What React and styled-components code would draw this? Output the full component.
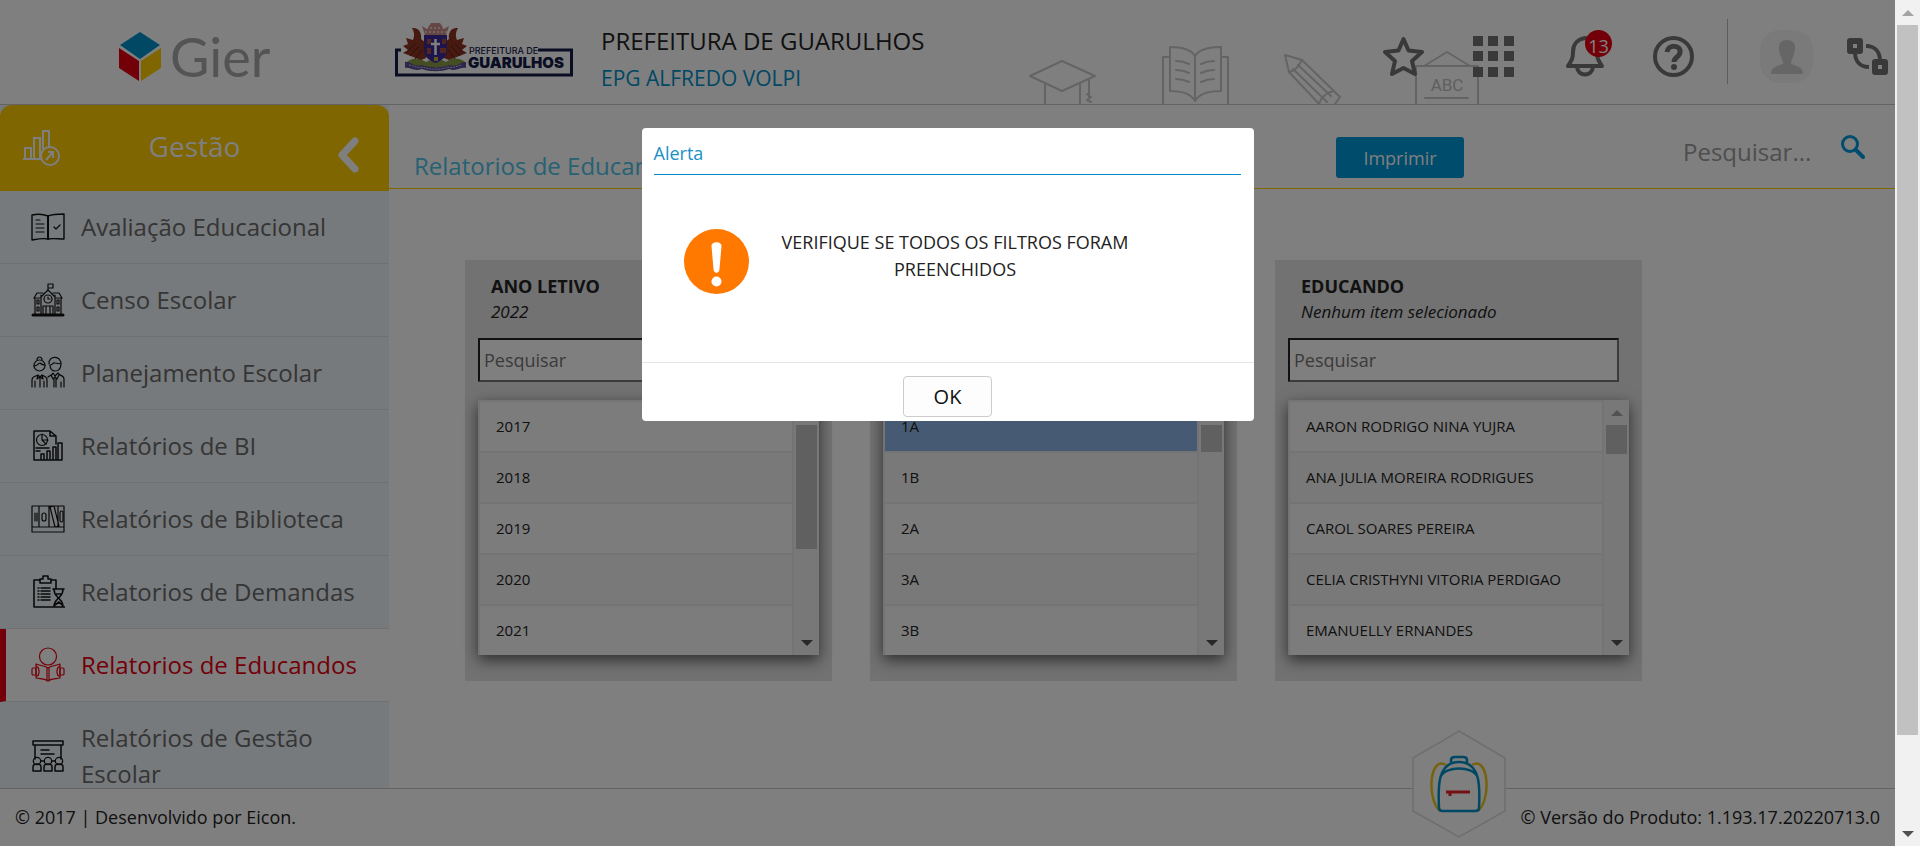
import React from "react";
import styled, { createGlobalStyle, css } from "styled-components";

const GlobalStyle = createGlobalStyle`
  *, *::before, *::after { box-sizing: border-box; }
  body { margin: 0; font-family: "Open Sans", "Noto Sans", sans-serif; color: #222; background: #fff; }
  button, input { font: inherit; }
  button { cursor: pointer; }
  ul { list-style: none; margin: 0; padding: 0; }
  svg { display: block; flex: none; }
`;

const Shell = styled.div`
  display: flex;
  height: 100vh;
  overflow: hidden;
`;

const Page = styled.div`
  position: relative;
  flex: 1;
  min-width: 0;
  display: flex;
  flex-direction: column;
`;

const Header = styled.header`
  position: relative;
  flex: none;
  display: flex;
  align-items: center;
  height: 105px;
  border-bottom: 1px solid #c6c6c6;
`;

const Brand = styled.div`
  display: flex;
  align-items: center;
  gap: 8px;
  width: 395px;
  padding: 10px 0 0 118px;
`;

const BrandName = styled.span`
  font-family: Lato, sans-serif;
  font-size: 54px;
  line-height: 60px;
  color: #a8a8a8;
`;

const City = styled.div`
  display: flex;
  align-items: center;
  gap: 28px;
  flex: 1;
`;

const CityNames = styled.div`
  display: flex;
  flex-direction: column;
  padding-top: 15px;
`;

const CityName = styled.strong`
  font-weight: 400;
  font-size: 24px;
  line-height: 36px;
`;

const SchoolLink = styled.a`
  font-size: 21px;
  line-height: 38px;
  color: #0090c8;
  text-decoration: none;
`;

const HeaderArt = styled.svg`
  position: absolute;
  right: 416px;
  bottom: 0;
  z-index: 0;
`;

const Tools = styled.nav`
  position: relative;
  display: flex;
  align-items: center;
  padding: 8px 7px 0 0;
`;

const ToolButton = styled.button`
  position: relative;
  border: 0;
  padding: 0;
  background: none;
  color: #737373;
  margin-right: ${(p) => p.$gap || 0}px;
`;

const Badge = styled.span`
  position: absolute;
  top: -6px;
  right: -8px;
  width: 27px;
  height: 27px;
  border-radius: 50%;
  background: #e60010;
  color: #fff;
  font-size: 18px;
  line-height: 32px;
  text-align: center;
`;

const Divider = styled.span`
  width: 1px;
  height: 65px;
  margin: 0 32px 10px 0;
  background: #b8b8b8;
`;

const Body = styled.div`
  flex: 1;
  min-height: 0;
  display: flex;
  overflow: hidden;
`;

const Sidebar = styled.aside`
  flex: none;
  width: 389px;
  background: #eef4f8;
`;

const SidebarHead = styled.div`
  display: flex;
  align-items: center;
  justify-content: space-between;
  height: 86px;
  padding: 0 30px 0 23px;
  border-radius: 12px 12px 0 0;
  background: #ffcc00;
  color: #fff;
`;

const SidebarTitle = styled.h2`
  flex: 1;
  margin: 0;
  padding: 0 8px 4px 0;
  font-weight: 400;
  font-size: 28px;
  line-height: 42px;
  text-align: center;
`;

const CollapseButton = styled.button`
  border: 0;
  padding: 14px 0 0;
  background: none;
  color: #fff;
`;

const MenuLink = styled.a`
  display: flex;
  align-items: center;
  gap: 16px;
  min-height: 73px;
  padding: 18px 24px 18px 31px;
  border-bottom: 1px solid #dbe2e6;
  color: #6b6b6b;
  font-size: 24px;
  line-height: 36px;
  text-decoration: none;
  svg { color: #111; }
  ${(p) =>
    p.$active &&
    css`
      background: #fff;
      border-left: 6px solid #e60010;
      padding-left: 25px;
      color: #e60010;
      svg { color: #e60010; }
    `}
`;

const Content = styled.main`
  flex: 1;
  min-width: 0;
`;

const Toolbar = styled.div`
  display: flex;
  align-items: center;
  height: 84px;
  padding: 0 30px 0 25px;
  border-bottom: 1px solid #ffcc00;
`;

const PageTitle = styled.h1`
  flex: 1;
  margin: 0;
  padding-top: 38px;
  font-weight: 400;
  font-size: 24px;
  line-height: 44px;
  color: #4cc3e8;
`;

const PrintButton = styled.button`
  width: 128px;
  height: 41px;
  margin: 22px 219px 0 0;
  border: 0;
  border-radius: 3px;
  background: #0098d8;
  color: #fff;
  font-size: 18px;
`;

const SearchForm = styled.form`
  display: flex;
  align-items: center;
  gap: 18px;
`;

const SearchInput = styled.input`
  width: 140px;
  border: 0;
  padding: 10px 0 0;
  outline: 0;
  background: none;
  font-size: 24px;
  line-height: 36px;
  &::placeholder { color: #9c9c9c; opacity: 1; }
`;

const SearchButton = styled.button`
  border: 0;
  padding: 0;
  background: none;
  color: #0098d8;
`;

const Filters = styled.div`
  display: flex;
  gap: 38px;
  padding: 71px 76px 0;
`;

const Panel = styled.section`
  flex: none;
  width: 367px;
  padding: 13px 13px 26px;
  background: #e4e4e4;
`;

const PanelTitle = styled.h3`
  margin: 0 13px;
  font-weight: 700;
  font-size: 18px;
  line-height: 26px;
`;

const PanelNote = styled.p`
  margin: 0 13px 13px;
  font-style: italic;
  font-size: 17px;
  line-height: 26px;
`;

const PanelSearch = styled.input`
  display: block;
  width: 331px;
  height: 44px;
  margin-bottom: 18px;
  padding: 0 4px;
  border: 2px solid;
  border-color: #222 #767676 #767676 #222;
  background: #fff;
  font-size: 18px;
  &::placeholder { color: #757575; opacity: 1; }
`;

const ListBox = styled.div`
  display: flex;
  height: 255px;
  padding-left: 2px;
  background: #e9e9e9;
  box-shadow: 0 5px 14px rgba(0, 0, 0, 0.6);
`;

const Options = styled.ul`
  flex: 1;
  overflow: hidden;
`;

const Option = styled.li`
  height: 51px;
  padding: 0 16px;
  border-top: 2px solid #e9e9e9;
  background: ${(p) => (p.$selected ? "#8cb6e6" : "#f3f3f3")};
  color: #222;
  font-size: 15px;
  line-height: 49px;
  white-space: nowrap;
  &:nth-child(odd) { background: ${(p) => (p.$selected ? "#8cb6e6" : "#f9f9f9")}; }
`;

const Track = styled.div`
  flex: none;
  display: flex;
  flex-direction: column;
  align-items: center;
  width: 25px;
  margin-left: ${(p) => (p.$inset ? 2 : 0)}px;
  background: #f1f1f1;
`;

const Arrow = styled.span`
  flex: none;
  display: grid;
  place-items: center;
  height: 25px;
`;

const Thumb = styled.span`
  width: 21px;
  flex: ${(p) => (p.$grow ? p.$grow : "none")};
  height: ${(p) => (p.$size ? p.$size + "px" : "auto")};
  background: #c1c1c1;
`;

const Rest = styled.span`
  flex: ${(p) => p.$grow || 1};
`;

const Footer = styled.footer`
  flex: none;
  position: relative;
  display: flex;
  align-items: center;
  justify-content: space-between;
  height: 58px;
  padding: 0 15px 2px;
  border-top: 1px solid #c6c6c6;
  background: #fff;
  font-size: 18px;
  line-height: 28px;
`;

const BackpackLink = styled.a`
  position: absolute;
  right: 389px;
  top: -59px;
`;

const Overlay = styled.div`
  position: absolute;
  inset: 0;
  z-index: 5;
  display: flex;
  justify-content: center;
  align-items: flex-start;
  padding-top: 128px;
  background: rgba(0, 0, 0, 0.5);
`;

const Dialog = styled.div`
  width: 612px;
  max-width: 90%;
  border-radius: 4px;
  background: #fff;
`;

const DialogTitle = styled.h2`
  margin: 0 13px 0 12px;
  padding: 12px 0 7px;
  border-bottom: 1px solid #0090c8;
  font-weight: 400;
  font-size: 18px;
  line-height: 27px;
  color: #1a8fc8;
`;

const DialogBody = styled.div`
  display: flex;
  align-items: flex-start;
  height: 187px;
  padding: 54px 42px 0;
`;

const DialogText = styled.p`
  flex: 1;
  margin: 0;
  padding: 0 50px 0 0;
  text-align: center;
  font-size: 18px;
  line-height: 27px;
  span { display: block; }
`;

const DialogFooter = styled.div`
  display: flex;
  justify-content: center;
  padding: 13px 0 4px;
  border-top: 1px solid #e5e5e5;
`;

const OkButton = styled.button`
  width: 89px;
  height: 41px;
  border: 1px solid #ccc;
  border-radius: 4px;
  background: #fdfdfd;
  color: #111;
  font-size: 20px;
`;

function LineIcon({ children, w = 34, h = 34, sw = 1.2 }) {
  return (
    <svg width={w} height={h} viewBox={`0 0 ${w} ${h}`} fill="none" stroke="currentColor" strokeWidth={sw} strokeLinecap="round" strokeLinejoin="round" aria-hidden="true">
      {children}
    </svg>
  );
}

const icons = {
  book: (
    <LineIcon>
      <path d="M17 6C12 4 6 4 1 5v25c6-1 11-2 16-1 5-1 10 0 16 0V4C27 4 22 4 17 6z" strokeWidth="1.4" />
      <path d="M17 6v23" strokeWidth="2" />
      <path d="M5 10h4M5 14h8M5 18h8M5 22h8M23 17l2 2 4-4" />
    </LineIcon>
  ),
  school: (
    <LineIcon>
      <path d="M17 7V1h5v4h-5M3 15l3-5h6M31 15l-3-5h-6M10 14l7-7 7 7M10 12v19M24 12v19M4 15v16M30 15v16M3 15h7M24 15h7M12 31v-8h10v8M15 23v8M19 23v8M6 17h2v4H6zM6 24h2v4H6zM26 17h2v4h-2zM26 24h2v4h-2z" />
      <circle cx="17" cy="16" r="4" />
      <path d="M17 14v2h2" />
      <path d="M2 32h30" strokeWidth="3" />
    </LineIcon>
  ),
  people: (
    <LineIcon>
      <circle cx="8.500" cy="9.500" r="5.500" />
      <path d="M6 4c0-4 5-4 5 0M3 10c4 0 4-3 6-3 2 2 3 2 5 2" />
      <path d="M18 8c-1-9 13-9 12 1-1 8-11 8-11 0 3 0 3-3 5-2l6 1" />
      <path d="M1 31v-7c0-4 3-3 6-5l2 2 2-2c3 2 5 1 5 5v7M4 31v-6M13 31v-6M7 19l-1 4 3-2 3 2-1-4M9 22v9" />
      <path d="M17 21c2-2 4-1 5-4l2 3 3-3c1 3 6 2 6 6v8M20 19l2 4 2-2 2 2 2-4M23 23v8M25 23v8M30 31v-5" />
    </LineIcon>
  ),
  bi: (
    <LineIcon>
      <path d="M25 15V7l-6-5H3v29h28V14h-4v17M19 2v5h6M10 31v-6h3v6M16 31v-9h3v9M22 31V18h3v13M5 19h13M5 22h4" strokeWidth="1.5" />
      <circle cx="11" cy="11" r="5.5" />
      <path d="M11 5v6h6M11 11l4 4" />
    </LineIcon>
  ),
  library: (
    <LineIcon>
      <path d="M1 4h32v26H1zM1 25h32M8 4v21M18 4v21M27 4v21M4 11v8M6 11v8M19 5l4-1 5 20-4 1z" />
      <rect x="11" y="11" width="4" height="8" rx="2" />
      <rect x="29" y="9" width="3" height="11" rx="1.5" />
    </LineIcon>
  ),
  demand: (
    <LineIcon>
      <path d="M8 5H3v27h31M20 5h5v8M9 4h3V1h5v3h3v4H9zM22 14h11M22 32h11M23 14c0 7 4 7 4 9s-4 2-4 9M32 14c0 7-4 7-4 9s4 2 4 9M25 19h5M24 30l4-3 3 3" strokeWidth="1.6" />
      <path d="M7 13h1M10 13h9M7 16h1M10 16h9M7 19h1M10 19h9M7 22h1M10 22h9M7 25h1M10 25h9" strokeWidth="1.5" />
    </LineIcon>
  ),
  reader: (
    <LineIcon h={36}>
      <circle cx="17" cy="9.500" r="8.500" />
      <path d="M17 21c-4-3-8-2-12-4v14c4 1 8 0 12 3 4-3 8-2 12-3V17c-4 2-8 1-12 4zM16 21v13M18 21v13M5 20c4-2 4 11 0 9M29 20c-4-2-4 11 0 9" />
      <rect x="1" y="21" width="4" height="7" rx="1" />
      <rect x="29" y="21" width="4" height="7" rx="1" />
    </LineIcon>
  ),
  meeting: (
    <LineIcon>
      <path d="M2 2h30v4H2zM4 6v14M30 6v14M10 11h8M10 15h13M2 32v-4c0-4 8-4 8 0v4zM13 32v-4c0-4 8-4 8 0v4zM24 32v-4c0-4 8-4 8 0v4zM10 22h3M21 22h3" strokeWidth="1.5" />
      <circle cx="6" cy="22" r="3.7" />
      <circle cx="17" cy="22" r="3.7" />
      <circle cx="28" cy="22" r="3.7" />
    </LineIcon>
  ),
};

const menu = [
  ["book", "Avaliação Educacional"],
  ["school", "Censo Escolar"],
  ["people", "Planejamento Escolar"],
  ["bi", "Relatórios de BI"],
  ["library", "Relatórios de Biblioteca"],
  ["demand", "Relatorios de Demandas"],
  ["reader", "Relatorios de Educandos", true],
  ["meeting", "Relatórios de Gestão Escolar"],
];

const filters = [
  { title: "ANO LETIVO", note: "2022", thumb: 124, options: ["2017", "2018", "2019", "2020", "2021"] },
  { title: "TURMA", note: "1A", thumb: 27, selected: "1A", options: ["1A", "1B", "2A", "3A", "3B"] },
  {
    title: "EDUCANDO",
    note: "Nenhum item selecionado",
    thumb: 29,
    options: ["AARON RODRIGO NINA YUJRA", "ANA JULIA MOREIRA RODRIGUES", "CAROL SOARES PEREIRA", "CELIA CRISTHYNI VITORIA PERDIGAO", "EMANUELLY ERNANDES"],
  },
];

function Triangle({ up, color }) {
  return (
    <svg width="12" height="6" viewBox="0 0 12 6" aria-hidden="true">
      <path d={up ? "M0 6L6 0l6 6z" : "M0 0l6 6 6-6z"} fill={color} />
    </svg>
  );
}

function CubeLogo() {
  return (
    <svg width="44" height="50" viewBox="0 0 44 50" aria-hidden="true">
      <path d="M22 0l20 13-20 14L2 13z" fill="#0090c8" />
      <path d="M1 16l20 13v20L1 36z" fill="#e60010" />
      <path d="M43 16L23 29v20l20-13z" fill="#ffcc00" />
    </svg>
  );
}

function CityLogo() {
  return (
    <svg width="178" height="60" viewBox="0 0 178 60" aria-label="Prefeitura de Guarulhos" role="img">
      <path d="M6 28H1.500v25h175V28H143" fill="none" stroke="#141a48" strokeWidth="3" />
      <path d="M12 40c8-6 14-3 19 0 7-4 14-4 20 0 5-4 12-5 19 0l-2 5H13z" fill="#8a9a45" />
      <path d="M26 38L8 31l5-3-5-4 5-2-2-6 7 2c2-5 1-8-1-12 7-1 10 5 9 11l5 4v15z" fill="#8c3420" />
      <path d="M54 38l18-7-5-3 5-4-5-2 2-6-7 2c-2-5-1-8 1-12-7-1-10 5-9 11l-5 4v15z" fill="#8c3420" />
      <path d="M12 30l8-8M15 34l9-10M20 37l7-9M68 30l-8-8M65 34l-9-10M60 37l-7-9" stroke="#5a1e12" strokeWidth="1" />
      <path d="M29 13h23v15c0 7-6 11-11.500 13C35 39 29 35 29 28z" fill="#3c2a9a" />
      <path d="M40.500 17v16M36 22h9" stroke="#fff" strokeWidth="2.500" />
      <path d="M32 17h4v5h-4zM47 17h4v5h-4zM32 26h4v6h-4zM45 26h6v5h-6z" fill="#a0503c" />
      <path d="M39 35h4v4h-4z" fill="#c8a83c" />
      <path d="M27 4l5 3 4-6h9l4 6 5-3-3 9H30z" fill="#c98d88" />
      <path d="M30 10h22M31 6h19" stroke="#fff" strokeWidth="1" strokeDasharray="2 2" />
      <path d="M10 40c5-2 9 6 17 3 8 3 20 3 27 0 8 3 12-4 17-3v6c-6-1-10 4-17 1-8 3-19 3-27 0-8 3-12-2-17-1z" fill="#5a4e96" />
      <path d="M14 43c4 0 8 4 14 2 7 3 18 3 25 0 6 2 10-2 14-2" fill="none" stroke="#c8c4dc" strokeWidth="1" strokeDasharray="2 1" />
      <text x="74" y="32" fontFamily="Inter, sans-serif" fontSize="9" fontWeight="500" fill="#141a48">PREFEITURA DE</text>
      <text x="73" y="46" fontFamily="Inter, sans-serif" fontSize="15" fontWeight="900" fill="#141a48">GUARULHOS</text>
    </svg>
  );
}

function Decoration() {
  return (
    <HeaderArt width="450" height="58" viewBox="0 0 450 58" fill="none" stroke="#c9c9c9" strokeWidth="2" strokeLinejoin="round" strokeLinecap="round" aria-hidden="true">
      <path d="M1 30L33 15l33 15-33 15zM16 37v23M51 37v23M60 33v18M58 48l4 3-4 3 4 2" />
      <path d="M141 11h-7v49M192 11h7v49M166 10c-5-8-16-9-25-9v44c9 0 20 1 25 10 5-9 17-10 26-10V1c-9 0-21 1-26 9zM166 10v44M147 15c5 0 9 1 13 3M147 24c5 0 9 1 13 3M147 33c5 0 9 1 13 3M185 15c-5 0-9 1-13 3M185 24c-5 0-9 1-13 3M185 33c-5 0-9 1-13 3" />
      <path d="M256 9l17 5 38 37-7 10M256 9l4 17 32 34M260 26c6-1 10-6 13-12M264 23l34 33M269 19l33 31M290 58c2-7 8-12 15-13" />
      <path d="M387 60V20h62v40M395 20l23-14 23 14M396 52h43" />
      <text x="418" y="45" textAnchor="middle" fontFamily="Roboto, sans-serif" fontSize="17" fill="#c0c0c0" stroke="none">ABC</text>
    </HeaderArt>
  );
}

function FilterPanel({ title, note, options, selected, thumb }) {
  const id = "filtro-" + title.replace(" ", "-").toLowerCase();
  return (
    <Panel aria-labelledby={id}>
      <PanelTitle id={id}>{title}</PanelTitle>
      <PanelNote>{note}</PanelNote>
      <PanelSearch type="text" placeholder="Pesquisar" aria-label={"Pesquisar " + title} />
      <ListBox>
        <Options>
          {options.map((o) => (
            <Option key={o} $selected={o === selected}>{o}</Option>
          ))}
        </Options>
        <Track $inset>
          <Arrow><Triangle up color="#a3a3a3" /></Arrow>
          <Thumb $size={thumb} />
          <Rest />
          <Arrow><Triangle color="#505050" /></Arrow>
        </Track>
      </ListBox>
    </Panel>
  );
}

export default function App() {
  return (
    <>
      <GlobalStyle />
      <Shell>
        <Page>
          <Header>
            <Decoration />
            <Brand>
              <CubeLogo />
              <BrandName>Gier</BrandName>
            </Brand>
            <City>
              <CityLogo />
              <CityNames>
                <CityName>PREFEITURA DE GUARULHOS</CityName>
                <SchoolLink href="#escola">EPG ALFREDO VOLPI</SchoolLink>
              </CityNames>
            </City>
            <Tools>
              <ToolButton $gap={49} aria-label="Favoritos">
                <svg width="41" height="41" viewBox="0 0 41 41" fill="none" stroke="currentColor" strokeWidth="4" strokeLinejoin="round">
                  <path d="M20.500 3l5 11.500L39 16l-10 9 3 13-11.500-6L9 38l3-13L2 16l13.500-1.500z" />
                </svg>
              </ToolButton>
              <ToolButton $gap={52} aria-label="Aplicativos">
                <svg width="41" height="41" viewBox="0 0 41 41" fill="currentColor">
                  {[0, 15, 31].map((y) => [0, 15, 31].map((x) => <rect key={x + "-" + y} x={x} y={y} width="10" height="10" />))}
                </svg>
              </ToolButton>
              <ToolButton $gap={49} aria-label="Notificações">
                <svg width="38" height="41" viewBox="0 0 38 41" fill="none" stroke="currentColor" strokeWidth="4" strokeLinejoin="round">
                  <path d="M19 2c-7 1-12 6-12 14 0 6-1 8-5 14h34c-4-6-5-8-5-14 0-8-5-13-12-14zM11 31c1 10 15 10 16 0" />
                </svg>
                <Badge>13</Badge>
              </ToolButton>
              <ToolButton $gap={33} aria-label="Ajuda">
                <svg width="41" height="41" viewBox="0 0 41 41" fill="none" stroke="currentColor">
                  <circle cx="20.500" cy="20.500" r="18.500" strokeWidth="4" />
                  <path d="M14 16c1-8 14-7 13 0 0 5-6 5-6 10" strokeWidth="5" />
                  <circle cx="21" cy="31" r="3" fill="currentColor" stroke="none" />
                </svg>
              </ToolButton>
              <Divider />
              <ToolButton $gap={34} aria-label="Perfil">
                <svg width="53" height="53" viewBox="0 0 53 53">
                  <rect width="53" height="53" rx="20" fill="#f4f4f4" />
                  <path d="M11 44c0-7 6-8 12-10 0-4-2-6-3-10-3-9 0-14 7-14s10 5 7 14c-1 4-3 6-3 10 6 2 12 3 12 10z" fill="#cdcdcd" />
                </svg>
              </ToolButton>
              <ToolButton aria-label="Trocar unidade">
                <svg width="41" height="37" viewBox="0 0 41 37" fill="none" stroke="currentColor">
                  <rect x="3" y="3" width="10" height="10" strokeWidth="6" strokeLinejoin="round" />
                  <rect x="28" y="24" width="10" height="10" strokeWidth="6" strokeLinejoin="round" />
                  <path d="M8 14c0 9 5 15 14 15M19 8c9 0 14 6 14 15" strokeWidth="4" />
                </svg>
              </ToolButton>
            </Tools>
          </Header>
          <Body>
            <Sidebar>
              <SidebarHead>
                <svg width="37" height="36" viewBox="0 0 37 36" fill="none" stroke="#fff" strokeWidth="2" aria-hidden="true">
                  <path d="M0 29h18M2 29V18h6v11M11 29V8h6v21M20 19V1h6v16" />
                  <circle cx="27" cy="26" r="9" />
                  <path d="M23 30l7-8M25 22h5v6" />
                </svg>
                <SidebarTitle>Gestão</SidebarTitle>
                <CollapseButton aria-label="Recolher menu">
                  <svg width="22" height="36" viewBox="0 0 22 36" fill="none" stroke="currentColor" strokeWidth="7" strokeLinecap="round" strokeLinejoin="round">
                    <path d="M18 4L5 18l13 14" />
                  </svg>
                </CollapseButton>
              </SidebarHead>
              <nav>
                <ul>
                  {menu.map(([icon, label, active]) => (
                    <li key={label}>
                      <MenuLink href="#menu" $active={active}>
                        {icons[icon]}
                        <span>{label}</span>
                      </MenuLink>
                    </li>
                  ))}
                </ul>
              </nav>
            </Sidebar>
            <Content>
              <Toolbar>
                <PageTitle>Relatorios de Educandos</PageTitle>
                <PrintButton>Imprimir</PrintButton>
                <SearchForm onSubmit={(e) => e.preventDefault()}>
                  <SearchInput type="text" placeholder="Pesquisar..." aria-label="Pesquisar" />
                  <SearchButton aria-label="Buscar">
                    <svg width="24" height="24" viewBox="0 0 24 24" fill="none" stroke="currentColor" strokeLinecap="round">
                      <circle cx="9" cy="9" r="7.500" strokeWidth="3" />
                      <path d="M15 15l7 7" strokeWidth="4" />
                    </svg>
                  </SearchButton>
                </SearchForm>
              </Toolbar>
              <Filters>
                {filters.map((f) => (
                  <FilterPanel key={f.title} {...f} />
                ))}
              </Filters>
            </Content>
          </Body>
          <Footer>
            <span>© 2017 | Desenvolvido por Eicon.</span>
            <BackpackLink href="#mochila" aria-label="Mochila">
              <svg width="94" height="108" viewBox="0 0 94 108" fill="none" strokeWidth="2.500">
                <path d="M47 1l46 27v53l-46 26L1 81V28z" fill="#fff" stroke="#dcdcdc" strokeWidth="1.500" />
                <path d="M34 35c-16-10-20 33-6 46M60 35c16-10 20 33 6 46" stroke="#efc41c" />
                <path d="M39 34v-4c0-2 2-3 4-3h8c2 0 4 1 4 3v4M27 78c-1-20-2-46 20-46s21 26 20 46c0 2-2 3-4 3H31c-2 0-4-1-4-3zM29 46c5-10 31-10 36 0" stroke="#0090c8" />
                <path d="M34 62h24" stroke="#e8202c" strokeWidth="3" />
                <path d="M38 63v3" stroke="#e8202c" strokeWidth="3" />
              </svg>
            </BackpackLink>
            <span>© Versão do Produto: 1.193.17.20220713.0</span>
          </Footer>
          <Overlay>
            <Dialog role="alertdialog" aria-labelledby="alerta-titulo">
              <DialogTitle id="alerta-titulo">Alerta</DialogTitle>
              <DialogBody>
                <svg width="65" height="65" viewBox="0 0 65 65" aria-hidden="true">
                  <circle cx="32.500" cy="32.500" r="32.500" fill="#ff7800" />
                  <path d="M27.500 17c0-5 10-5 10 0l-2 23c0 5-6 5-6 0z" fill="#fff" />
                  <circle cx="32.500" cy="52.500" r="5" fill="#fff" />
                </svg>
                <DialogText>
                  <span>VERIFIQUE SE TODOS OS FILTROS FORAM</span>
                  <span>PREENCHIDOS</span>
                </DialogText>
              </DialogBody>
              <DialogFooter>
                <OkButton>OK</OkButton>
              </DialogFooter>
            </Dialog>
          </Overlay>
        </Page>
        <Track aria-hidden="true">
          <Arrow><Triangle up color="#a3a3a3" /></Arrow>
          <Thumb $grow={710} />
          <Rest $grow={86} />
          <Arrow><Triangle color="#505050" /></Arrow>
        </Track>
      </Shell>
    </>
  );
}
